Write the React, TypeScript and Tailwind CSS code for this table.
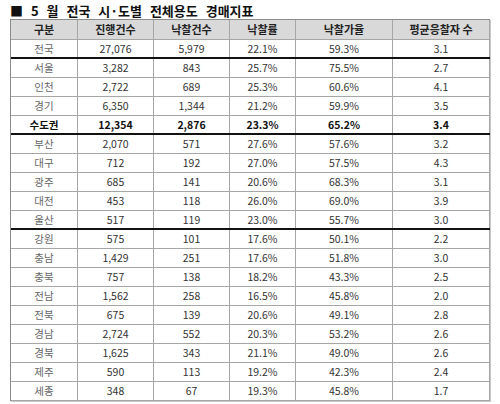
import React from "react";

type Row = { name: string; a: string; b: string; c: string; d: string; e: string; bold?: boolean; thick?: boolean };

const rows: Row[] = [
  { name: "전국", a: "27,076", b: "5,979", c: "22.1%", d: "59.3%", e: "3.1", thick: true },
  { name: "서울", a: "3,282", b: "843", c: "25.7%", d: "75.5%", e: "2.7" },
  { name: "인천", a: "2,722", b: "689", c: "25.3%", d: "60.6%", e: "4.1" },
  { name: "경기", a: "6,350", b: "1,344", c: "21.2%", d: "59.9%", e: "3.5" },
  { name: "수도권", a: "12,354", b: "2,876", c: "23.3%", d: "65.2%", e: "3.4", bold: true, thick: true },
  { name: "부산", a: "2,070", b: "571", c: "27.6%", d: "57.6%", e: "3.2" },
  { name: "대구", a: "712", b: "192", c: "27.0%", d: "57.5%", e: "4.3" },
  { name: "광주", a: "685", b: "141", c: "20.6%", d: "68.3%", e: "3.1" },
  { name: "대전", a: "453", b: "118", c: "26.0%", d: "69.0%", e: "3.9" },
  { name: "울산", a: "517", b: "119", c: "23.0%", d: "55.7%", e: "3.0", thick: true },
  { name: "강원", a: "575", b: "101", c: "17.6%", d: "50.1%", e: "2.2" },
  { name: "충남", a: "1,429", b: "251", c: "17.6%", d: "51.8%", e: "3.0" },
  { name: "충북", a: "757", b: "138", c: "18.2%", d: "43.3%", e: "2.5" },
  { name: "전남", a: "1,562", b: "258", c: "16.5%", d: "45.8%", e: "2.0" },
  { name: "전북", a: "675", b: "139", c: "20.6%", d: "49.1%", e: "2.8" },
  { name: "경남", a: "2,724", b: "552", c: "20.3%", d: "53.2%", e: "2.6" },
  { name: "경북", a: "1,625", b: "343", c: "21.1%", d: "49.0%", e: "2.6" },
  { name: "제주", a: "590", b: "113", c: "19.2%", d: "42.3%", e: "2.4" },
  { name: "세종", a: "348", b: "67", c: "19.3%", d: "45.8%", e: "1.7" },
];

const widths = ["w-[67px]", "w-[76px]", "w-[76px]", "w-[66px]", "w-[97px]", "w-[97px]"];

function Cell({ w, children, className = "" }: { w: string; children: React.ReactNode; className?: string }) {
  return (
    <div className={`${w} shrink-0 h-full flex items-center justify-center border-r border-[#a6a6a6] ${className}`}>
      {children}
    </div>
  );
}

export default function App() {
  const headers = ["구분", "진행건수", "낙찰건수", "낙찰률", "낙찰가율", "평균응찰자 수"];
  return (
    <div
      className="w-[500px] h-[404px] bg-white overflow-hidden"
      style={{ fontFamily: '"Noto Sans CJK KR", "Noto Sans", sans-serif' }}
    >
      <div className="h-[19px] pl-[10px] pt-[3px] text-[13px] leading-[15px] font-bold text-[#111] [word-spacing:5px] whitespace-nowrap">
        ■ 5 월 전국 시·도별 전체용도 경매지표
      </div>
      <div className="ml-[10px] w-[480px] border-l border-t border-[#8c8c8c] shadow-[1px_1px_0_#c8c8c8]">
        <div className="flex h-[20px] box-border border-b border-[#a6a6a6] bg-[#d9d9d9] text-[11px] font-bold text-[#222]">
          {headers.map((h, i) => (
            <Cell key={h} w={widths[i]} className={i === 5 ? "border-[#8c8c8c]" : ""}>
              {h}
            </Cell>
          ))}
        </div>
        {rows.map((r) => (
          <div
            key={r.name}
            className={`flex h-[19px] box-border bg-white text-[10.5px] ${
              r.thick ? "border-b-2 border-[#111]" : "border-b border-[#a6a6a6]"
            } ${r.bold ? "font-bold text-[#111]" : "text-[#333]"}`}
          >
            <Cell w={widths[0]} className={r.bold ? "text-[#111]" : "text-[#666]"}>
              {r.name}
            </Cell>
            <Cell w={widths[1]}>{r.a}</Cell>
            <Cell w={widths[2]}>{r.b}</Cell>
            <Cell w={widths[3]}>{r.c}</Cell>
            <Cell w={widths[4]}>{r.d}</Cell>
            <Cell w={widths[5]} className="border-[#8c8c8c]">
              {r.e}
            </Cell>
          </div>
        ))}
      </div>
    </div>
  );
}
